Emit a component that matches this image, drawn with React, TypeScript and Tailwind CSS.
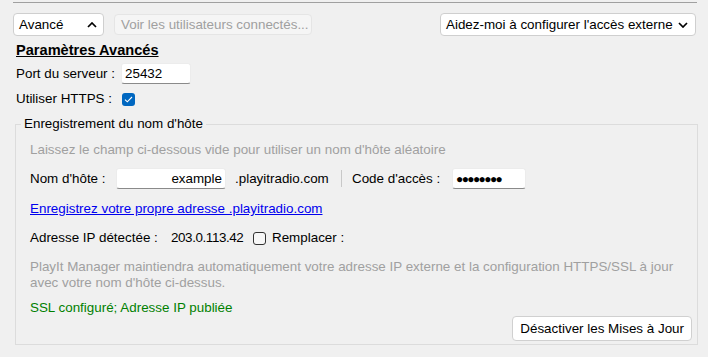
function Chevron({ up }: { up?: boolean }) {
  return (
    <svg width="10" height="6" viewBox="0 0 10 6" className={up ? "rotate-180" : ""}>
      <path d="M1 1l4 4 4-4" fill="none" stroke="#000" strokeWidth="1.7" />
    </svg>
  );
}

function TextBox({ className, children }: { className: string; children?: React.ReactNode }) {
  return (
    <div
      className={
        "h-[21px] bg-white border border-[#ececec] border-b-[#8a8a8a] rounded-[3px] flex items-center " +
        className
      }
    >
      {children}
    </div>
  );
}

export default function App() {
  return (
    <div className="w-[708px] h-[357px] bg-[#f0f0f0] overflow-hidden text-[13.4px] leading-[16px] text-black font-['Liberation_Sans',Arial,sans-serif]">
      <div className="ml-[13px] mr-[11px] mt-[2px] h-px bg-[#a0a0a0]" />

      <div className="mt-[10px] ml-[13px] mr-[12px] flex items-start justify-between">
        <div className="flex items-start gap-[10px]">
          <div className="w-[91px] h-[23px] bg-white border border-[#cfcfcf] rounded-[4px] flex items-center justify-between pl-[5px] pr-[6px]">
            <span>Avancé</span>
            <Chevron up />
          </div>
          <div className="mt-px w-[198px] h-[21px] bg-[#f5f5f5] border border-[#e5e5e5] rounded-[4px] flex items-center pl-[6px] text-[#a0a0a0]">
            Voir les utilisateurs connectés...
          </div>
        </div>
        <div className="w-[256px] h-[23px] bg-white border border-[#cfcfcf] rounded-[4px] flex items-center justify-between pl-[5px] pr-[7px]">
          <span>Aidez-moi à configurer l'accès externe</span>
          <Chevron />
        </div>
      </div>

      <div className="mt-[6px] ml-[16px] text-[14.6px] font-bold underline">Paramètres Avancés</div>

      <div className="mt-[5px] ml-[16px] flex items-center">
        <span className="w-[105px]">Port du serveur :</span>
        <TextBox className="w-[70px] pl-[3px]">25432</TextBox>
      </div>

      <div className="mt-[7px] ml-[16px] flex items-center">
        <span className="w-[106px]">Utiliser HTTPS :</span>
        <span className="w-[13px] h-[13px] rounded-[3px] bg-[#0067c0] flex items-center justify-center">
          <svg width="9" height="7" viewBox="0 0 9 7">
            <path d="M1 3.6l2.3 2.2L8 1" fill="none" stroke="#fff" strokeWidth="1.1" />
          </svg>
        </span>
      </div>

      <fieldset className="mt-[9px] ml-[15px] mr-[10px] border border-[#dcdcdc] pl-[14px] pr-[5px] pb-[3px]">
        <legend className="-ml-[9px] px-[3px]">Enregistrement du nom d'hôte</legend>

        <div className="mt-[10px] text-[#a0a0a0]">
          Laissez le champ ci-dessous vide pour utiliser un nom d'hôte aléatoire
        </div>

        <div className="mt-[10px] flex items-center">
          <span className="w-[86px]">Nom d'hôte :</span>
          <TextBox className="w-[110px] justify-end pr-[3px]">example</TextBox>
          <span className="ml-[9px] w-[106px]">.playitradio.com</span>
          <span className="w-px h-[17px] bg-[#c8c8c8]" />
          <span className="ml-[10px] w-[100px]">Code d'accès :</span>
          <TextBox className="w-[74px] pl-[3px]">
            <span className="text-[12px] tracking-[-1.6px]">●●●●●●●●</span>
          </TextBox>
        </div>

        <div className="mt-[12px]">
          <a href="#" className="text-[#0000ee] underline">
            Enregistrez votre propre adresse .playitradio.com
          </a>
        </div>

        <div className="mt-[13px] flex items-center">
          <span className="w-[141px]">Adresse IP détectée :</span>
          <span className="w-[82px] tracking-[-0.4px]">203.0.113.42</span>
          <span className="w-[13px] h-[13px] rounded-[3px] border border-[#333] bg-[#f7f7f7]" />
          <span className="ml-[6px]">Remplacer :</span>
        </div>

        <div className="mt-[13px] text-[#a0a0a0]">
          PlayIt Manager maintiendra automatiquement votre adresse IP externe et la configuration HTTPS/SSL à jour
          <br />
          avec votre nom d'hôte ci-dessus.
        </div>

        <div className="mt-[9px] text-[#008000]">SSL configuré; Adresse IP publiée</div>

        <div className="flex justify-end">
          <button className="h-[25px] px-[7px] bg-white border border-[#d0d0d0] rounded-[4px]">
            Désactiver les Mises à Jour
          </button>
        </div>
      </fieldset>
    </div>
  );
}
